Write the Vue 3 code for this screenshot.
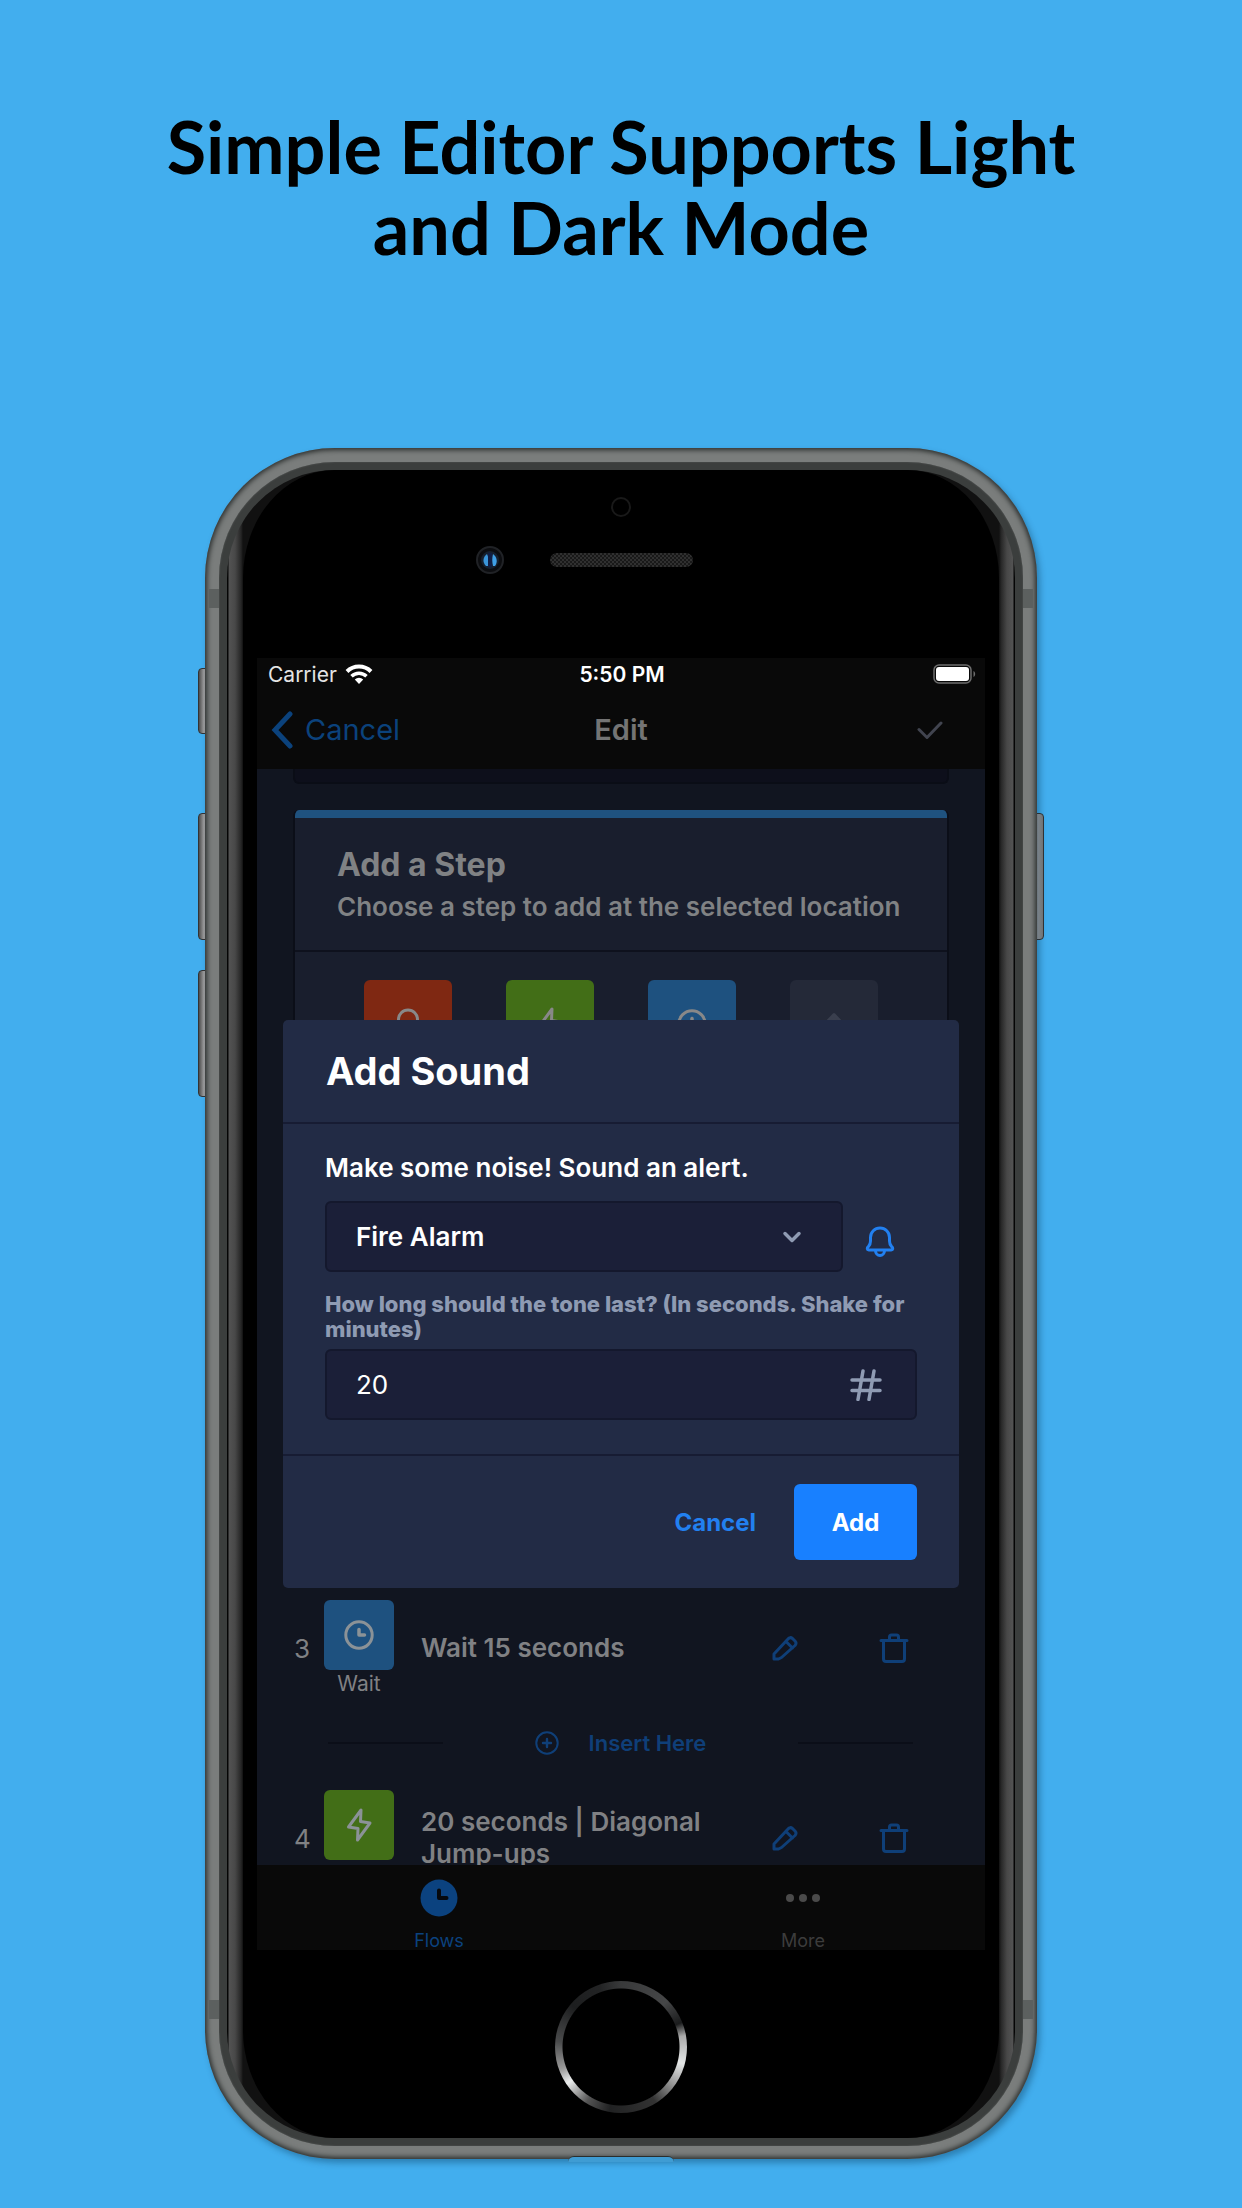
<script setup>
import { ref } from 'vue'

const tone = ref('Fire Alarm')
const duration = ref('20')

const stepTypes = [
  { id: 'sound', icon: 'bell' },
  { id: 'action', icon: 'flash' },
  { id: 'wait', icon: 'clock' },
  { id: 'none', icon: 'diamond' },
]

const steps = [
  { number: 3, type: 'wait', icon: 'clock', caption: 'Wait', title: 'Wait 15 seconds' },
  { number: 4, type: 'action', icon: 'flash', caption: '', title: '20 seconds | Diagonal Jump-ups' },
]
</script>

<template>
  <main class="poster">
    <svg class="defs" aria-hidden="true">
      <symbol id="bell" viewBox="0 0 34 34">
        <path d="M7.500 16V12.500a9.500 9.500 0 0 1 19 0V16c0 3 .6 4 2 5.400 1.900 1.800 1.500 3.600-.3 3.600H5.800c-1.800 0-2.200-1.800-.3-3.600C6.900 20 7.500 19 7.500 16Z" />
        <path d="M12.500 25.500a4.500 5 0 0 0 9 0" />
      </symbol>
      <symbol id="flash" viewBox="0 0 34 34">
        <path d="M19 2 6.500 19 16 20.500 15.500 32 28 15 18.500 13.500Z" />
      </symbol>
      <symbol id="clock" viewBox="0 0 34 34">
        <circle cx="17" cy="17" r="13.200" />
        <path d="M17 11.500V17h5.500" stroke-width="3.500" />
      </symbol>
      <symbol id="diamond" viewBox="0 0 34 34">
        <path d="M17 7.500 26 17l-9 9.500L8 17Z" fill="currentColor" />
      </symbol>
    </svg>

    <h1>Simple Editor Supports Light<br>and Dark Mode</h1>

    <div class="phone">
      <span class="key mute"></span>
      <span class="key up"></span>
      <span class="key down"></span>
      <span class="key power"></span>
      <span class="band band-top"></span>
      <span class="band band-bottom"></span>
      <span class="lip"></span>
      <div class="rim">
        <div class="glass">
          <div class="face">
            <div class="forehead">
              <span class="sensor"></span>
              <div class="earpiece">
                <span class="camera">
                  <svg viewBox="0 0 28 28" width="28" height="28">
                    <circle cx="14" cy="14" r="13" fill="#0c0d10" stroke="#202226" stroke-width="2" />
                    <circle cx="14" cy="14" r="9" fill="#16202f" />
                    <path d="M11 8c-4 3-5 8-1 12h2c1-4 1-8-1-12Z" fill="#3a95d9" />
                    <path d="M17 8c4 3 5 8 2 12h-2c-1-4-1-8 0-12Z" fill="#3f9fe6" />
                    <path d="M12 7h4v14h-4Z" fill="#101d44" />
                  </svg>
                </span>
                <span class="speaker"></span>
              </div>
            </div>

            <section class="screen">
              <div class="status">
                <span class="carrier">
                  Carrier
                  <svg viewBox="0 0 28 20" width="28" height="20" fill="none" stroke="#fff" stroke-width="4">
                    <path d="M2 7.500a17 17 0 0 1 24 0" />
                    <path d="M6.500 12.200a10.700 10.700 0 0 1 15 0" stroke-width="3.500" />
                    <path d="M14 20l4.200-4.600a6 6 0 0 0-8.400 0Z" fill="#fff" stroke="none" />
                  </svg>
                </span>
                <time>5:50 PM</time>
                <svg class="battery" viewBox="0 0 43 20" width="43" height="20">
                  <rect x="1" y="1" width="37" height="18" rx="5" fill="none" stroke="#6d6d6d" stroke-width="1.500" />
                  <rect x="3" y="3" width="33" height="14" rx="3" fill="#fff" />
                  <path d="M40.500 7v6c2.200-1 2.200-5 0-6Z" fill="#6d6d6d" />
                </svg>
              </div>

              <header class="nav">
                <button class="back" type="button">
                  <svg viewBox="0 0 22 38" width="22" height="38" fill="none" stroke="currentColor" stroke-width="5">
                    <path d="M19 3 4 19l15 16" stroke-linecap="round" />
                  </svg>
                  Cancel
                </button>
                <h2>Edit</h2>
                <button class="done" type="button" aria-label="Save">
                  <svg viewBox="0 0 26 20" width="26" height="20" fill="none" stroke="#41444f" stroke-width="3" stroke-linecap="round" stroke-linejoin="round">
                    <path d="m2 9.500 8 8L24 3" />
                  </svg>
                </button>
              </header>

              <div class="content">
                <div class="previous"></div>
                <section class="card">
                  <div class="card-head">
                    <h3>Add a Step</h3>
                    <p>Choose a step to add at the selected location</p>
                  </div>
                  <div class="types">
                    <button v-for="t in stepTypes" :key="t.id" type="button" class="type" :class="t.id" :aria-label="t.id">
                      <svg class="icon" width="34" height="34"><use :href="'#' + t.icon" /></svg>
                    </button>
                  </div>
                </section>

                <div class="steps">
                  <template v-for="(s, i) in steps" :key="s.number">
                    <div v-if="i" class="insert">
                      <span class="line"></span>
                      <button type="button">
                        <svg viewBox="0 0 24 24" width="24" height="24" fill="none" stroke="currentColor" stroke-width="2">
                          <circle cx="12" cy="12" r="10.700" />
                          <path d="M12 8v8M8 12h8" stroke-width="2.400" stroke-linecap="round" />
                        </svg>
                        Insert Here
                      </button>
                      <span class="line"></span>
                    </div>
                    <article class="step">
                      <span class="number">{{ s.number }}</span>
                      <div class="kind">
                        <span class="badge" :class="s.type">
                          <svg class="icon" width="34" height="34"><use :href="'#' + s.icon" /></svg>
                        </span>
                        <span class="caption">{{ s.caption }}</span>
                      </div>
                      <p class="title">{{ s.title }}</p>
                      <div class="tools">
                        <button type="button" aria-label="Edit step">
                          <svg viewBox="0 0 26 26" width="26" height="26">
                            <path d="M2 24v-5L16 4q2-2.500 4.500-.5l2.500 2.500q2 2 0 4.500L9.500 22.500 6.500 24ZM14 6.500l6.500 6.500" />
                          </svg>
                        </button>
                        <button type="button" aria-label="Delete step">
                          <svg viewBox="0 0 30 30" width="30" height="30">
                            <path d="M2 7.500h26M4.500 7.500V26q0 2.500 2.500 2.500h16q2.500 0 2.500-2.500V7.500M10.500 7V4q0-2 2-2h5q2 0 2 2v3" />
                          </svg>
                        </button>
                      </div>
                    </article>
                  </template>
                </div>
              </div>

              <nav class="tabs">
                <a href="#flows" class="active">
                  <svg viewBox="0 0 38 38" width="38" height="38">
                    <circle cx="19" cy="19" r="18.500" fill="currentColor" />
                    <path d="M19 11.500V19h7.500" fill="none" stroke="#06090d" stroke-width="4" stroke-linecap="round" stroke-linejoin="round" />
                  </svg>
                  Flows
                </a>
                <a href="#more">
                  <svg viewBox="0 0 38 38" width="38" height="38" fill="#4a4a4a">
                    <circle cx="6" cy="19" r="4" /><circle cx="19" cy="19" r="4" /><circle cx="32" cy="19" r="4" />
                  </svg>
                  More
                </a>
              </nav>

              <div class="overlay">
                <form class="modal" role="dialog" aria-labelledby="modal-title" @submit.prevent>
                  <h2 id="modal-title">Add Sound</h2>
                  <div class="fields">
                    <label class="lead" for="tone">Make some noise! Sound an alert.</label>
                    <div class="tone-row">
                      <div class="select-box">
                        <select id="tone" v-model="tone">
                          <option>Fire Alarm</option>
                        </select>
                        <svg viewBox="0 0 20 12" width="20" height="12" fill="none" stroke="#8f9bb3" stroke-width="3.500" stroke-linecap="round" stroke-linejoin="round">
                          <path d="m3 2.500 7 7 7-7" />
                        </svg>
                      </div>
                      <button class="preview" type="button" aria-label="Play tone">
                        <svg class="icon" width="34" height="34"><use href="#bell" /></svg>
                      </button>
                    </div>
                    <label class="small" for="duration">How long should the tone last? (In seconds. Shake for minutes)</label>
                    <div class="input-box">
                      <input id="duration" v-model="duration" type="text" inputmode="numeric">
                      <svg viewBox="0 0 32 32" width="32" height="32" fill="none" stroke="#8f9bb3" stroke-width="3.500" stroke-linecap="round">
                        <path d="M2 11h28M2 21.500h28M13 2 8 30.500M24 2l-5 28.500" />
                      </svg>
                    </div>
                  </div>
                  <div class="actions">
                    <button class="cancel" type="button">Cancel</button>
                    <button class="add" type="submit">Add</button>
                  </div>
                </form>
              </div>
            </section>

            <div class="chin"><span class="home"></span></div>
          </div>
        </div>
      </div>
    </div>
  </main>
</template>

<style>
body {
  background: #42aeee;
}
</style>

<style scoped>
* {
  box-sizing: border-box;
}

.poster {
  position: relative;
  z-index: 0;
  display: flex;
  flex-direction: column;
  align-items: center;
  padding: 106px 24px 50px;
  background: #42aeee;
  font-family: Inter, "Liberation Sans", sans-serif;
}

.defs {
  position: absolute;
  width: 0;
  height: 0;
}

h1, h2, h3, p {
  margin: 0;
}

button {
  padding: 0;
  border: 0;
  background: none;
  color: inherit;
  font: inherit;
}

svg {
  display: block;
  flex: none;
}

.icon {
  fill: none;
  stroke: currentColor;
  stroke-width: 3px;
  stroke-linejoin: round;
  stroke-linecap: round;
}

h1 {
  margin-bottom: 180px;
  color: #000;
  font: 700 72px/81px Lato, sans-serif;
  text-align: center;
}

/* Device body */
.phone {
  position: relative;
  width: 100%;
  max-width: 832px;
  padding: 14px 14px 13px;
  border-radius: 130px;
  background: #7a7d7c;
  box-shadow: inset 0 0 5px 2px #2a2e2d, 3px 4px 6px rgb(0 40 70 / 35%);
}

.key {
  position: absolute;
  left: -7px;
  z-index: -1;
  width: 12px;
  height: 127px;
  border: 1px solid #333;
  border-radius: 4px;
  background: linear-gradient(90deg, #4c4c4c, #a0a0a0 5px, #777);
}

.mute { top: 220px; height: 66px; }
.up { top: 365px; }
.down { top: 522px; }
.power { top: 365px; right: -7px; left: auto; }

.band {
  position: absolute;
  right: 4px;
  left: 4px;
  height: 19px;
  background: #5c605f;
}

.band-top { top: 141px; }
.band-bottom { bottom: 140px; }

.lip {
  position: absolute;
  bottom: -3px;
  left: 50%;
  width: 106px;
  height: 6px;
  margin-left: -53px;
  border-top: 1px solid #2a2e2d;
  border-radius: 8px 8px 0 0;
  background: #3f9cd3;
}

.rim {
  position: relative;
  padding: 8px;
  border-radius: 116px;
  background: #3b3e3d;
  box-shadow: inset 0 0 2px #585b5a;
}

.glass {
  padding: 0 16px;
  border-radius: 108px;
  background: linear-gradient(90deg, #050505 1px, #535353 2px, #484848 8px, #262626 14px, #111 16px, #111 calc(100% - 16px), #262626 calc(100% - 14px), #484848 calc(100% - 8px), #535353 calc(100% - 2px), #050505 calc(100% - 1px));
}

.face {
  padding: 0 14px;
  border-radius: 92px / 108px;
  background: #000;
}

.forehead {
  display: flex;
  flex-direction: column;
  align-items: center;
  height: 188px;
  padding-top: 27px;
}

.sensor {
  width: 20px;
  height: 20px;
  border: 2px solid #191919;
  border-radius: 50%;
}

.earpiece {
  display: grid;
  grid-template-columns: 1fr auto 1fr;
  align-items: center;
  width: 100%;
  margin-top: 29px;
}

.camera {
  justify-self: end;
  margin-right: 46px;
}

.speaker {
  width: 143px;
  height: 14px;
  border-radius: 7px;
  background: conic-gradient(#303030 25%, #191919 0 50%, #303030 0 75%, #191919 0) 0 0 / 4px 4px;
}

.chin {
  display: flex;
  justify-content: center;
  height: 188px;
  padding-top: 31px;
}

.home {
  width: 132px;
  height: 132px;
  border-radius: 50%;
  background:
    radial-gradient(circle, #000 58px, transparent 59px),
    conic-gradient(#38393a, #464748 45deg, #1a1b1c 68deg, #aaa 80deg, #e4e6e6 105deg, #999 125deg, #333 148deg, #202122 190deg, #555 212deg, #eceeee 236deg, #999 250deg, #4a4b4c 275deg, #1d1e1f 310deg, #222324 340deg, #38393a);
}

/* App */
.screen {
  position: relative;
  background: #090909;
}

.status {
  display: grid;
  grid-template-columns: 1fr auto 1fr;
  align-items: center;
  height: 32px;
  padding: 0 9px 0 11px;
  color: #fff;
  font-size: 21px;
}

.carrier {
  display: flex;
  align-items: center;
  gap: 8px;
  color: #e4e4e4;
}

.status time {
  font-weight: 600;
}

.battery {
  justify-self: end;
}

.nav {
  display: grid;
  grid-template-columns: 1fr auto 1fr;
  align-items: center;
  height: 79px;
  padding: 0 42px 0 14px;
  font-size: 29px;
}

.back {
  display: flex;
  align-items: center;
  gap: 12px;
  margin-right: 28px;
  color: #0b427c;
}

.nav h2 {
  margin-left: 28px;
  color: #747474;
  font-size: 29px;
  font-weight: 600;
}

.done {
  justify-self: end;
}

.content {
  height: 1096px;
  overflow: hidden;
  background: #111520;
}

.previous {
  height: 15px;
  margin: 0 36px 26px;
  border: 2px solid #0a0d16;
  border-top: 0;
  border-radius: 0 0 6px 6px;
  background: #0d0f1b;
}

.card {
  height: 770px;
  margin: 0 36px 20px;
  border: 2px solid #0b0e18;
  border-top: 0;
  border-radius: 6px;
  background: #191e2d;
  overflow: hidden;
}

.card-head {
  padding: 27px 42px 21px;
  border-top: 8px solid #1f527f;
  border-bottom: 2px solid #0e111d;
  color: #808284;
  font-size: 26px;
  font-weight: 600;
  line-height: 44px;
}

.card h3 {
  font-size: 32px;
  font-weight: 700;
  line-height: 40px;
}

.types {
  display: flex;
  justify-content: center;
  gap: 54px;
  padding-top: 28px;
}

.type {
  display: grid;
  place-items: center;
  width: 88px;
  height: 88px;
  border-radius: 6px;
  color: #888;
}

.sound { background: #7f2812; }
.action { background: #426e17; }
.wait { background: #1e517f; }
.none { background: #242938; color: #3a3f4e; }

.steps {
  padding: 0 61px 0 37px;
}

.step {
  display: flex;
  align-items: center;
  height: 96px;
  color: #808184;
  font-size: 26px;
}

.number {
  width: 30px;
}

.kind {
  width: 70px;
  text-align: center;
}

.badge {
  display: grid;
  place-items: center;
  height: 70px;
  border-radius: 6px;
  color: #8b9297;
}

.caption {
  display: block;
  height: 26px;
  font-size: 21px;
  line-height: 28px;
}

.title {
  flex: 1;
  padding-left: 27px;
  font-weight: 600;
  line-height: 32px;
}

.tools {
  display: flex;
  gap: 49px;
}

.tools button {
  display: grid;
  place-items: center;
  width: 60px;
  height: 60px;
}

.tools path {
  fill: none;
  stroke: #0f3f78;
  stroke-width: 3px;
  stroke-linecap: round;
  stroke-linejoin: round;
}

.insert {
  display: flex;
  align-items: center;
  justify-content: space-between;
  height: 94px;
  padding: 0 11px 0 34px;
}

.insert button {
  display: flex;
  align-items: center;
  gap: 30px;
  color: #0f3f78;
  font-size: 22px;
  font-weight: 600;
}

.line {
  width: 115px;
  height: 2px;
  background: #0b0e18;
}

.tabs {
  display: flex;
  height: 85px;
  padding-top: 14px;
}

.tabs a {
  display: flex;
  flex: 1;
  flex-direction: column;
  align-items: center;
  gap: 12px;
  color: #3c3c3c;
  font-size: 18px;
  line-height: 24px;
  text-decoration: none;
}

.tabs .active {
  color: #0b427f;
}

/* Dialog */
.overlay {
  position: absolute;
  inset: 0;
  display: flex;
  align-items: center;
  padding: 0 26px;
}

.modal {
  flex: 1;
  border-radius: 5px;
  background: #222b45;
  color: #fff;
}

.modal h2 {
  padding: 0 43px;
  border-bottom: 2px solid #171c33;
  font-size: 38px;
  font-weight: 700;
  line-height: 102px;
}

.fields {
  padding: 24px 42px 34px;
}

.lead {
  display: block;
  margin-bottom: 13px;
  font-size: 26px;
  font-weight: 600;
  line-height: 40px;
}

.tone-row {
  display: flex;
  align-items: center;
  gap: 20px;
}

.select-box, .input-box {
  display: flex;
  align-items: center;
  height: 71px;
  padding-right: 33px;
  border: 2px solid #14182d;
  border-radius: 6px;
  background: #1b1f38;
}

.select-box {
  flex: 1;
  padding-right: 39px;
}

select, input {
  flex: 1;
  align-self: stretch;
  min-width: 0;
  padding: 0 0 0 29px;
  border: 0;
  outline: 0;
  background: none;
  color: #fff;
  font: 400 26px/34px Inter, "Liberation Sans", sans-serif;
  appearance: none;
}

select {
  font-weight: 600;
}

.preview {
  margin-right: 20px;
  padding-top: 10px;
  color: #2280f0;
}

.small {
  display: block;
  margin: 20px 0 7px;
  color: #8f9bb3;
  font-size: 22px;
  font-weight: 800;
  line-height: 25px;
}

.actions {
  display: flex;
  align-items: center;
  justify-content: flex-end;
  gap: 38px;
  padding: 28px 42px;
  border-top: 2px solid #171c33;
  font-size: 24px;
  font-weight: 700;
}

.cancel {
  color: #2280f0;
}

.add {
  width: 123px;
  height: 76px;
  border-radius: 6px;
  background: #1880ff;
  color: #fff;
}
</style>
